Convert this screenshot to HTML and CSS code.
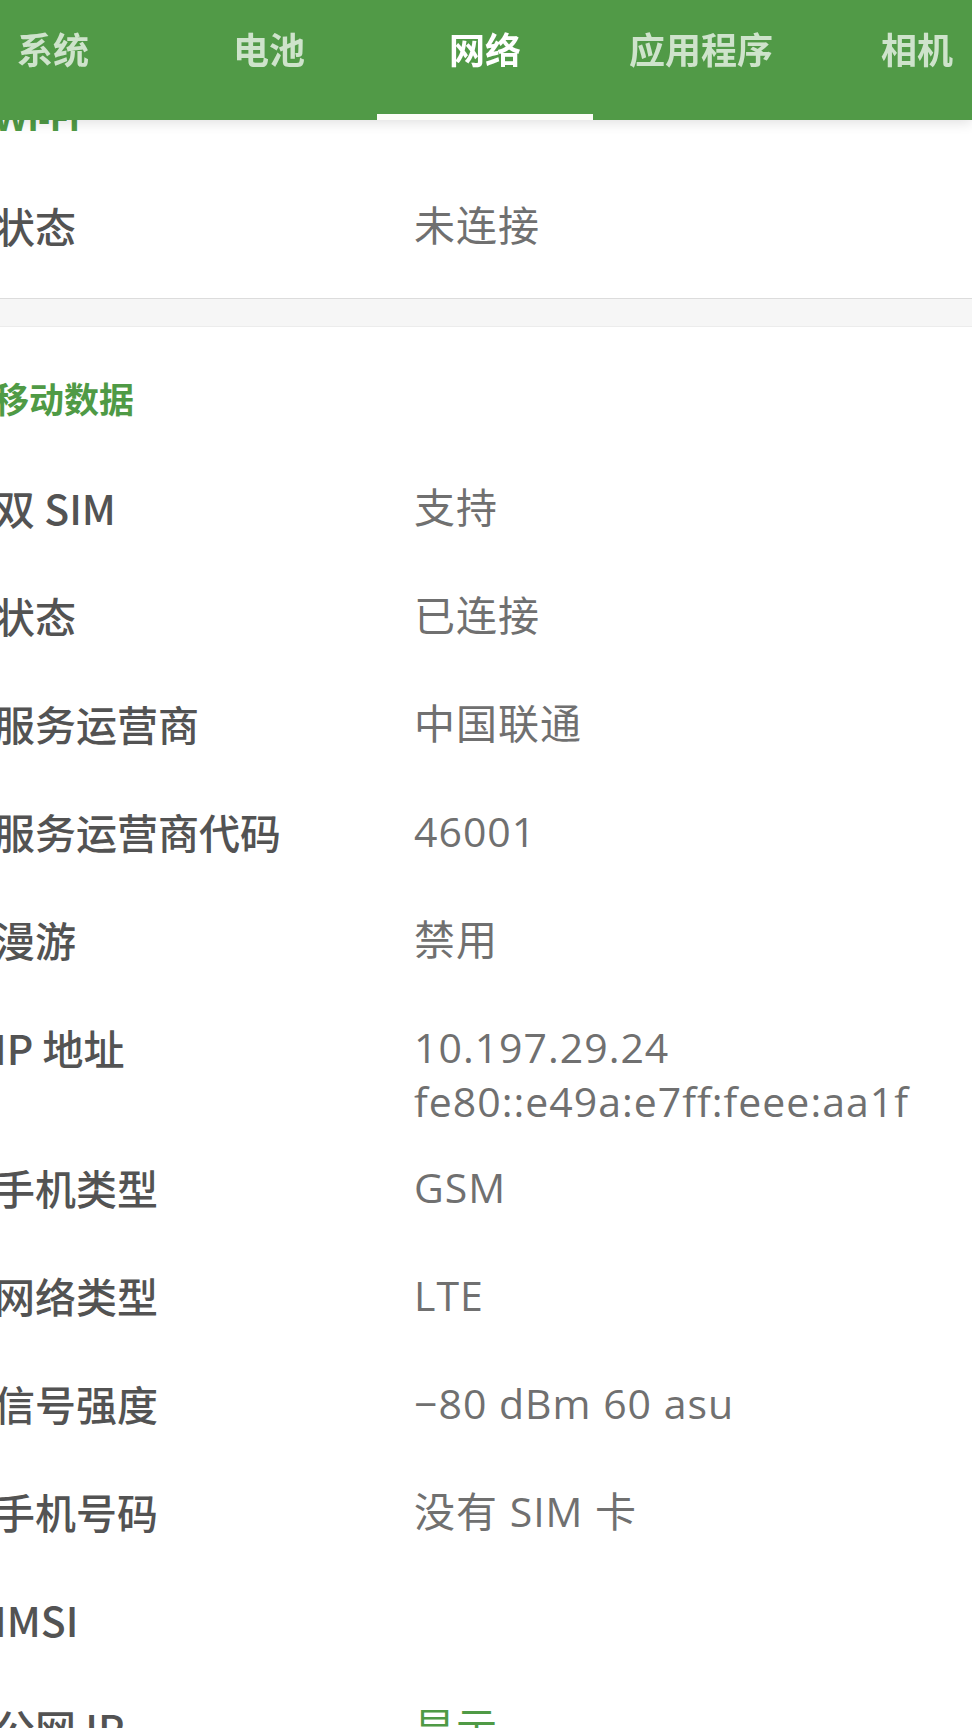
FILE: index.html
```html
<!DOCTYPE html>
<html lang="zh-CN">
<head>
    <meta charset="UTF-8">
    <meta name="viewport" content="width=device-width, initial-scale=1.0">
    <title>设备信息 - 网络</title>
    <link rel="stylesheet" href="styles.css">
</head>
<body>
    <header class="appbar">
        <nav class="tabs">
            <div class="tab">系统</div>
            <div class="tab">电池</div>
            <div class="tab active">网络</div>
            <div class="tab">应用程序</div>
            <div class="tab">相机</div>
        </nav>
    </header>

    <main class="page">
        <section class="section section-wifi">
            <h2 class="section-title">Wi-Fi</h2>
            <div class="row">
                <div class="label">状态</div>
                <div class="value">未连接</div>
            </div>
        </section>

        <div class="divider"></div>

        <section class="section">
            <h2 class="section-title">移动数据</h2>
            <div class="row">
                <div class="label">双 SIM</div>
                <div class="value">支持</div>
            </div>
            <div class="row">
                <div class="label">状态</div>
                <div class="value">已连接</div>
            </div>
            <div class="row">
                <div class="label">服务运营商</div>
                <div class="value">中国联通</div>
            </div>
            <div class="row">
                <div class="label">服务运营商代码</div>
                <div class="value">46001</div>
            </div>
            <div class="row">
                <div class="label">漫游</div>
                <div class="value">禁用</div>
            </div>
            <div class="row">
                <div class="label">IP 地址</div>
                <div class="value">10.197.29.24<br>fe80::e49a:e7ff:feee:aa1f</div>
            </div>
            <div class="row">
                <div class="label">手机类型</div>
                <div class="value">GSM</div>
            </div>
            <div class="row">
                <div class="label">网络类型</div>
                <div class="value">LTE</div>
            </div>
            <div class="row">
                <div class="label">信号强度</div>
                <div class="value">−80 dBm 60 asu</div>
            </div>
            <div class="row">
                <div class="label">手机号码</div>
                <div class="value">没有 SIM 卡</div>
            </div>
            <div class="row">
                <div class="label">IMSI</div>
                <div class="value"></div>
            </div>
            <div class="row">
                <div class="label">公网 IP</div>
                <div class="value link">显示</div>
            </div>
        </section>
    </main>
</body>
</html>
```

FILE: styles.css
```css
* { margin: 0; padding: 0; box-sizing: border-box; }
body {
    font-family: "Open Sans", "Noto Sans CJK SC", sans-serif;
    background: #fff;
    color: #555;
    overflow: hidden;
}

/* top bar with scrollable tabs */
.appbar {
    position: fixed;
    top: 0;
    left: 0;
    right: 0;
    height: 120px;
    background: #519a47;
    box-shadow: 0 3px 12px rgba(0,0,0,0.12);
    z-index: 10;
    overflow: hidden;
}
.tabs {
    display: flex;
    margin-left: -55px;
    height: 100%;
}
.tab {
    flex: 0 0 216px;
    height: 120px;
    padding-top: 21px;
    line-height: 54px;
    text-align: center;
    font-family: "Noto Sans CJK SC", sans-serif;
    font-size: 36px;
    font-weight: 700;
    color: rgba(255,255,255,0.72);
    border-bottom: 6px solid transparent;
}
.tab.active {
    color: #fff;
    border-bottom-color: #fdfdf8;
}

/* list content, scrolled under the bar */
.page {
    padding-top: 45px;
    margin-left: -6px;
}
.section-wifi { padding-bottom: 19px; }
.section-title {
    padding: 46px 0 26px;
    line-height: 54px;
    font-size: 35px;
    font-weight: 700;
    color: #4f9a45;
}
.row {
    display: grid;
    grid-template-columns: 420px 1fr;
    min-height: 108px;
    padding: 27px 0 5px;
    line-height: 54px;
    font-size: 41px;
}
.label {
    font-family: "Noto Sans CJK SC", sans-serif;
    font-weight: 500;
    color: #535353;
}
.value {
    color: #707070;
    letter-spacing: 1px;
}
.value.link { color: #4f9a45; }

.divider {
    height: 29px;
    margin-left: 6px;
    background: #f6f6f6;
    border-top: 1px solid #dcdcdc;
    border-bottom: 1px solid #ececec;
}
```
